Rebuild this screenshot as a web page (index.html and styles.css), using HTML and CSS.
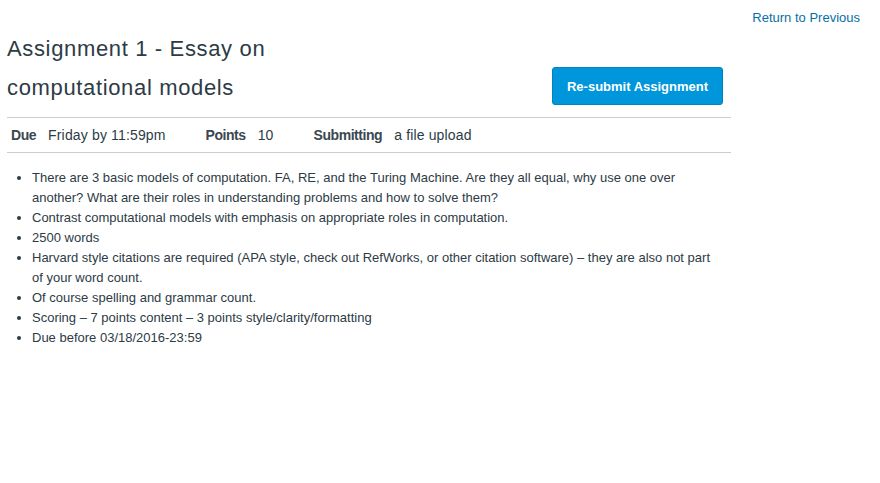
FILE: index.html
```html
<!DOCTYPE html>
<html>
<head>
<meta charset="utf-8">
<link rel="stylesheet" href="styles.css">
</head>
<body>
<div class="page">
  <div class="main">
    <div class="header">
      <h1 class="title">Assignment 1 - Essay on computational models</h1>
      <button class="btn">Re-submit Assignment</button>
    </div>
    <div class="details">
      <span class="label">Due</span><span class="value">Friday by 11:59pm</span>
      <span class="label">Points</span><span class="value">10</span>
      <span class="label">Submitting</span><span class="value">a file upload</span>
    </div>
    <ul class="desc">
      <li>There are 3 basic models of computation. FA, RE, and the Turing Machine. Are they all equal, why use one over another? What are their roles in understanding problems and how to solve them?</li>
      <li>Contrast computational models with emphasis on appropriate roles in computation.</li>
      <li>2500 words</li>
      <li>Harvard style citations are required (APA style, check out RefWorks, or other citation software) – they are also not part of your word count.</li>
      <li>Of course spelling and grammar count.</li>
      <li>Scoring – 7 points content – 3 points style/clarity/formatting</li>
      <li>Due before 03/18/2016-23:59</li>
    </ul>
  </div>
  <div class="side">
    <a class="return" href="#">Return to Previous</a>
  </div>
</div>
</body>
</html>
```
FILE: styles.css
```css
html, body {
  margin: 0;
  padding: 0;
  background: #fff;
}
body {
  font-family: "Liberation Sans", Arial, sans-serif;
  color: #2d3b45;
}
.page {
  display: flex;
  padding: 0 20px 0 7px;
}
.main {
  width: 724px;
}
.side {
  flex: 1;
  display: flex;
  justify-content: flex-end;
  padding-top: 10px;
}
.return {
  color: #0770a3;
  text-decoration: none;
  font-size: 13px;
  line-height: 16px;
}
.header {
  display: flex;
  justify-content: space-between;
  align-items: flex-end;
  padding-top: 29px;
  padding-bottom: 10px;
  border-bottom: 1px solid #c7cdd1;
}
.title {
  margin: 0;
  font-weight: normal;
  font-size: 22px;
  letter-spacing: 0.65px;
  line-height: 39px;
  width: 300px;
}
.btn {
  background: #0096db;
  border: 1px solid #0084c1;
  border-radius: 3px;
  color: #fff;
  font-family: "Liberation Sans", Arial, sans-serif;
  font-weight: bold;
  font-size: 13px;
  width: 171px;
  height: 38px;
  margin-right: 8px;
  margin-bottom: 2px;
  padding: 0;
}
.details {
  display: flex;
  align-items: center;
  height: 34px;
  font-size: 14px;
  border-bottom: 1px solid #c7cdd1;
  padding-left: 4px;
}
.label {
  font-weight: bold;
  letter-spacing: -0.45px;
  color: #3a4750;
  margin-right: 12px;
}
.value {
  letter-spacing: 0.15px;
  margin-right: 40px;
}
.desc {
  margin: 15px 0 0;
  padding: 0 14px 0 25px;
  font-size: 13px;
  line-height: 20px;
}
```
